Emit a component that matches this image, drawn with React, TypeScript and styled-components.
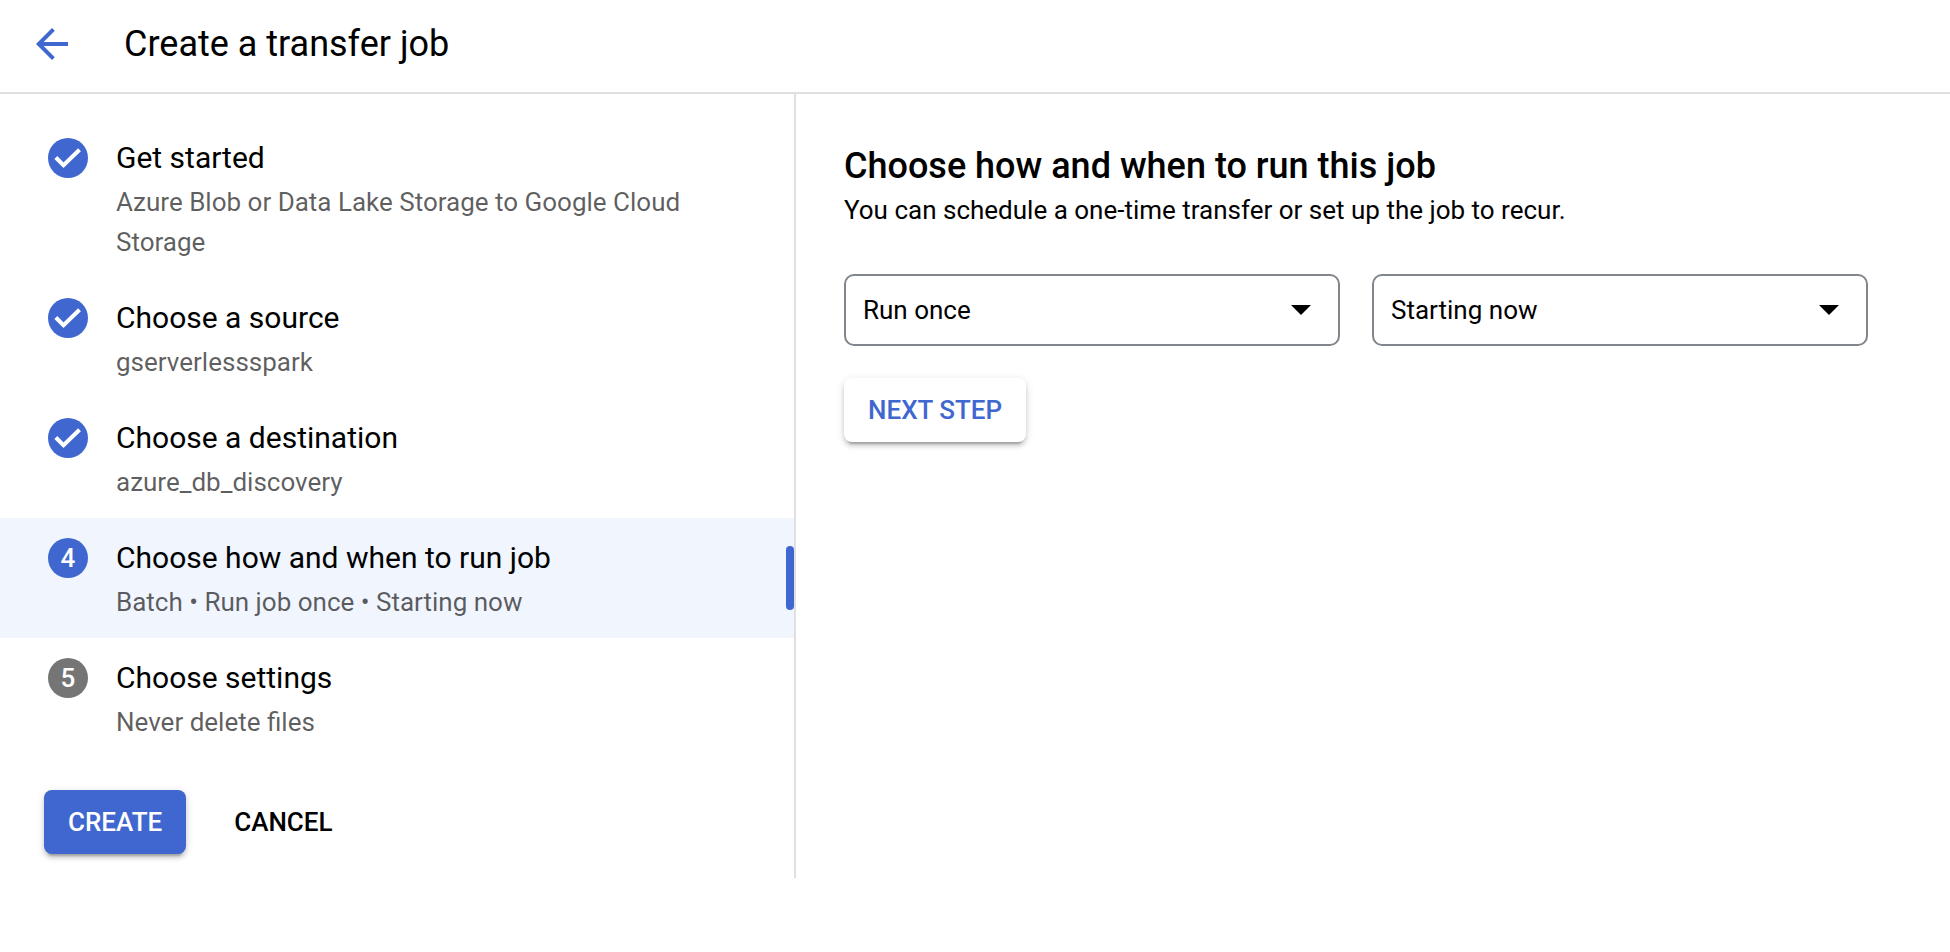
import React, { useState } from "react";
import styled, { createGlobalStyle } from "styled-components";

const blue = "#4067d0";
const line = "#e0e0e0";

const GlobalStyle = createGlobalStyle`
  *, *::before, *::after { box-sizing: border-box; }
  body {
    margin: 0;
    background: #fff;
    color: #000;
    font-family: Roboto, "Liberation Sans", sans-serif;
    font-size: 26px;
    line-height: 40px;
  }
`;

const Header = styled.header`
  display: flex;
  align-items: center;
  gap: 48px;
  padding: 20px 28px 24px;
  border-bottom: 2px solid ${line};
`;

const BackButton = styled.button`
  display: flex;
  padding: 0;
  border: 0;
  background: none;
  color: ${blue};
  cursor: pointer;
`;

const PageTitle = styled.h1`
  margin: 0;
  font-size: 36px;
  font-weight: 400;
  line-height: 48px;
`;

const Layout = styled.div`
  display: flex;
  align-items: flex-start;
`;

const Sidebar = styled.nav`
  flex: 0 1 796px;
  padding: 24px 0;
  border-right: 2px solid ${line};
`;

const StepList = styled.ol`
  margin: 0;
  padding: 0;
  list-style: none;
`;

const Step = styled.li<{ $active: boolean }>`
  position: relative;
  display: flex;
  gap: 28px;
  padding: 20px 96px 16px 48px;
  background: ${(p) => (p.$active ? "#f0f5fe" : "transparent")};

  &::after {
    content: "";
    display: ${(p) => (p.$active ? "block" : "none")};
    position: absolute;
    top: 28px;
    right: 0;
    width: 8px;
    height: 64px;
    border-radius: 4px;
    background: ${blue};
  }
`;

const StepMarker = styled.span<{ $muted: boolean }>`
  display: flex;
  flex: none;
  align-items: center;
  justify-content: center;
  width: 40px;
  height: 40px;
  border-radius: 50%;
  background: ${(p) => (p.$muted ? "#757575" : blue)};
  color: #fff;
  font-weight: 500;
`;

const StepText = styled.div`
  display: flex;
  flex-direction: column;
  gap: 4px;
`;

const StepTitle = styled.h2`
  margin: 0;
  font-size: 30px;
  font-weight: 400;
  line-height: 40px;
`;

const StepSummary = styled.p`
  margin: 0;
  color: rgba(0, 0, 0, 0.64);
`;

const Actions = styled.div`
  display: flex;
  gap: 24px;
  padding: 32px 44px 0;
`;

const Button = styled.button<{ $kind: "filled" | "raised" | "text" }>`
  padding: 12px 24px;
  border: 0;
  border-radius: 8px;
  background: ${(p) => (p.$kind === "filled" ? blue : p.$kind === "raised" ? "#fff" : "none")};
  color: ${(p) => (p.$kind === "filled" ? "#fff" : p.$kind === "raised" ? blue : "#000")};
  box-shadow: ${(p) =>
    p.$kind === "text"
      ? "none"
      : "0 6px 2px -4px rgba(0,0,0,.2), 0 4px 4px rgba(0,0,0,.14), 0 2px 10px rgba(0,0,0,.12)"};
  font: 500 26px/40px Roboto, "Liberation Sans", sans-serif;
  cursor: pointer;
`;

const Content = styled.main`
  flex: 1 1 0;
  min-width: 0;
  padding: 48px;
`;

const ContentTitle = styled.h2`
  margin: 0;
  font-size: 36px;
  font-weight: 500;
  line-height: 48px;
`;

const Intro = styled.p`
  margin: 0 0 44px;
`;

const Fields = styled.div`
  display: grid;
  grid-template-columns: 1fr 1fr;
  gap: 32px;
  max-width: 1024px;
  margin-bottom: 32px;
`;

const Field = styled.div`
  display: grid;
  align-items: center;

  & > * { grid-area: 1 / 1; }
`;

const Select = styled.select`
  appearance: none;
  width: 100%;
  height: 72px;
  padding: 0 64px 0 17px;
  border: 2px solid #80868b;
  border-radius: 10px;
  background: #fff;
  color: #000;
  font: 400 26px/40px Roboto, "Liberation Sans", sans-serif;
`;

const Caret = styled.svg`
  justify-self: end;
  margin-right: 29px;
  pointer-events: none;
`;

const steps = [
  { title: "Get started", summary: "Azure Blob or Data Lake Storage to Google Cloud Storage", state: "done" },
  { title: "Choose a source", summary: "gserverlessspark", state: "done" },
  { title: "Choose a destination", summary: "azure_db_discovery", state: "done" },
  { title: "Choose how and when to run job", summary: "Batch • Run job once • Starting now", state: "active" },
  { title: "Choose settings", summary: "Never delete files", state: "todo" },
];

function CheckIcon() {
  return (
    <svg width="40" height="40" viewBox="0 0 40 40" fill="none" aria-label="Completed">
      <path d="M7.800 19.500l7.700 7.700L31.500 11.700" stroke="#fff" strokeWidth="4" />
    </svg>
  );
}

function SelectField({ label, options }: { label: string; options: string[] }) {
  const [value, setValue] = useState(options[0]);
  return (
    <Field>
      <Select aria-label={label} value={value} onChange={(e) => setValue(e.target.value)}>
        {options.map((o) => (
          <option key={o}>{o}</option>
        ))}
      </Select>
      <Caret width="20" height="10" viewBox="0 0 20 10" aria-hidden="true">
        <path d="M0 0h20L10 10z" />
      </Caret>
    </Field>
  );
}

export default function App() {
  return (
    <>
      <GlobalStyle />
      <Header>
        <BackButton aria-label="Back">
          <svg width="48" height="48" viewBox="0 0 24 24" fill="currentColor" aria-hidden="true">
            <path d="M20 11H7.830l5.590-5.590L12 4l-8 8 8 8 1.410-1.410L7.830 13H20v-2z" />
          </svg>
        </BackButton>
        <PageTitle>Create a transfer job</PageTitle>
      </Header>
      <Layout>
        <Sidebar aria-label="Steps">
          <StepList>
            {steps.map((s, i) => (
              <Step key={s.title} $active={s.state === "active"}>
                <StepMarker $muted={s.state === "todo"}>
                  {s.state === "done" ? <CheckIcon /> : i + 1}
                </StepMarker>
                <StepText>
                  <StepTitle>{s.title}</StepTitle>
                  <StepSummary>{s.summary}</StepSummary>
                </StepText>
              </Step>
            ))}
          </StepList>
          <Actions>
            <Button $kind="filled">CREATE</Button>
            <Button $kind="text">CANCEL</Button>
          </Actions>
        </Sidebar>
        <Content>
          <ContentTitle>Choose how and when to run this job</ContentTitle>
          <Intro>You can schedule a one-time transfer or set up the job to recur.</Intro>
          <Fields>
            <SelectField label="Frequency" options={["Run once"]} />
            <SelectField label="Start time" options={["Starting now"]} />
          </Fields>
          <Button $kind="raised">NEXT STEP</Button>
        </Content>
      </Layout>
    </>
  );
}
